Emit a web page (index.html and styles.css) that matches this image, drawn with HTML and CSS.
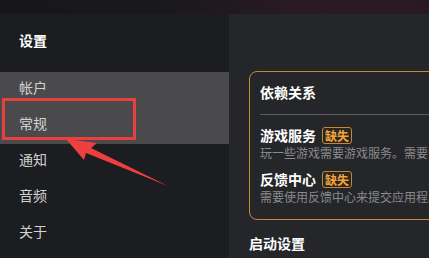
FILE: index.html
```html
<!DOCTYPE html>
<html lang="zh-CN">
<head>
    <meta charset="UTF-8">
    <meta name="viewport" content="width=device-width, initial-scale=1.0">
    <title>设置</title>
    <link rel="stylesheet" href="styles.css">
</head>
<body>

    <div class="topbar"></div>

    <div class="main">
        <!-- Sidebar -->
        <div class="sidebar">
            <div class="sidebar-title">设置</div>
            <div class="nav">
                <div class="nav-item active">帐户</div>
                <div class="nav-item active">常规</div>
                <div class="nav-item">通知</div>
                <div class="nav-item">音频</div>
                <div class="nav-item">关于</div>
            </div>
        </div>

        <!-- Content -->
        <div class="content">
            <div class="card">
                <div class="card-title">依赖关系</div>
                <div class="divider"></div>
                <div class="dep">
                    <div class="dep-name">游戏服务 <span class="badge">缺失</span></div>
                    <div class="dep-desc">玩一些游戏需要游戏服务。需要安装游戏服务才能继续。</div>
                </div>
                <div class="dep">
                    <div class="dep-name">反馈中心 <span class="badge">缺失</span></div>
                    <div class="dep-desc">需要使用反馈中心来提交应用程序的反馈。</div>
                </div>
            </div>
            <div class="section-title">启动设置</div>
        </div>
    </div>

    <!-- annotation overlay -->
    <div class="mark-box"></div>
    <svg class="mark-arrow" width="429" height="258" viewBox="0 0 429 258">
        <polygon points="66,139 97,143 91,148 168,186 86,153 84,160" fill="#ee3f3f"/>
    </svg>

</body>
</html>
```

FILE: styles.css
```css
body {
    font-family: 'Noto Sans CJK SC', 'Noto Sans', sans-serif;
    background: #1c1d20;
    margin: 0;
    width: 429px;
    height: 258px;
    overflow: hidden;
    position: relative;
}

.topbar {
    height: 14px;
    background: linear-gradient(to right, #171719 0%, #19181a 35%, #2a1a24 70%, #2b1922 100%);
}

.main {
    display: flex;
    height: 244px;
}

.sidebar {
    width: 229px;
    background: #1c1d20;
}

.sidebar-title {
    color: #ffffff;
    font-size: 14px;
    font-weight: bold;
    line-height: 20px;
    padding: 16px 0 0 19px;
    margin-bottom: 22px;
}

.nav-item {
    height: 36px;
    line-height: 30px;
    padding-left: 19px;
    font-size: 14px;
    color: #d2d2d2;
}

.nav-item.active {
    background: #4a4a4d;
}

.content {
    flex: 1;
    background: #25262a;
    padding: 57px 0 0 20px;
    overflow: hidden;
}

.card {
    width: 300px;
    border: 1px solid #c58636;
    border-radius: 8px;
    padding: 10px 0 13px 10px;
}

.card-title {
    color: #ffffff;
    font-size: 14px;
    font-weight: bold;
    line-height: 20px;
    margin-bottom: 12px;
}

.divider {
    height: 1px;
    background: #5c5c5e;
    margin-bottom: 11px;
}

.dep + .dep {
    margin-top: 8px;
}

.dep-name {
    display: flex;
    align-items: center;
    gap: 6px;
    color: #ffffff;
    font-size: 14px;
    font-weight: bold;
    line-height: 18px;
}

.badge {
    font-size: 12px;
    font-weight: bold;
    line-height: 15px;
    color: #f2a33a;
    background: #2a2622;
    border: 1px solid #c58636;
    border-radius: 3px;
    padding: 0 2px;
}

.dep-desc {
    color: #8a8a8c;
    font-size: 12px;
    line-height: 18px;
    white-space: nowrap;
}

.section-title {
    color: #ffffff;
    font-size: 14px;
    font-weight: bold;
    line-height: 20px;
    margin-top: 13px;
}

.mark-box {
    position: absolute;
    left: 2px;
    top: 98px;
    width: 128px;
    height: 36px;
    border: 3px solid #e8403f;
}

.mark-arrow {
    position: absolute;
    left: 0;
    top: 0;
}
```
